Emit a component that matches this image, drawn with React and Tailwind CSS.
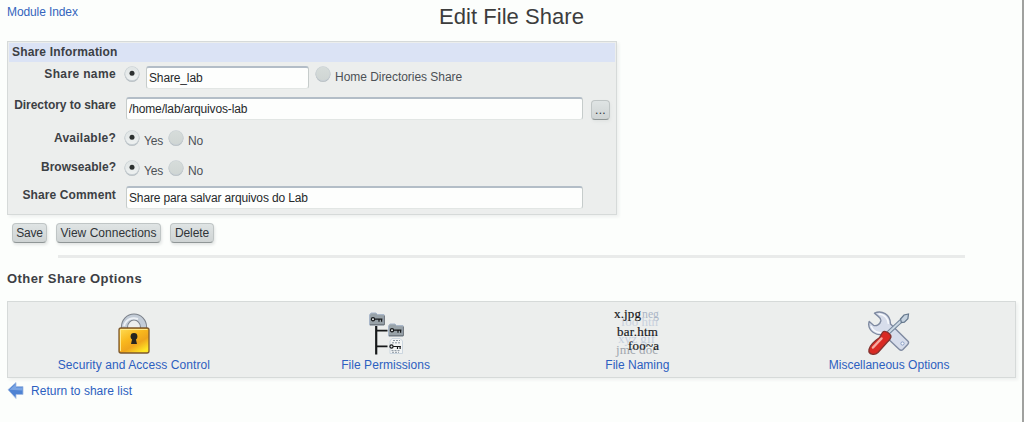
import React from "react";

function Radio({ checked = false }) {
  return (
    <svg className="block h-4 w-4 shrink-0" viewBox="0 0 16 16">
      <defs>
        <linearGradient id={checked ? "radioOn" : "radioOff"} x1="0" y1="0" x2="0" y2="1">
          <stop offset="0" stopColor={checked ? "#dfe4e4" : "#d6dcda"} />
          <stop offset="1" stopColor={checked ? "#eef1f1" : "#d0d6d4"} />
        </linearGradient>
      </defs>
      <circle cx="8" cy="8.4" r="7.4" fill="#a9b2b8" />
      <circle cx="8" cy="7.8" r="7.5" fill="#c9d0d4" />
      <circle cx="8" cy="7.4" r="6.7" fill={checked ? "url(#radioOn)" : "url(#radioOff)"} />
      {checked && <circle cx="8" cy="7.2" r="2.5" fill="#2c3030" />}
    </svg>
  );
}

function Label({ className, children }) {
  return (
    <div className={"w-[107px] shrink-0 text-right font-bold leading-4 whitespace-nowrap text-[#3c4044] " + className}>
      {children}
    </div>
  );
}

function Field({ className, value }) {
  return (
    <input
      className={
        "block rounded-[3px] border border-t-2 border-[#c6cccb] border-t-[#b3bdc7] border-b-[#e2e6e4] bg-[#fdfefd] pb-px pl-[2px] text-xs tracking-[-0.14px] text-[#26292b] outline-none " +
        className
      }
      defaultValue={value}
    />
  );
}

function Button({ className, children }) {
  return (
    <button
      className={
        "flex h-5 items-center justify-center rounded-[4px] border border-[#bfc5c5] border-b-[#8f9696] bg-linear-to-b from-[#dfe4e4] to-[#cfd4d4] whitespace-nowrap text-[#303438] shadow-[1px_2px_3px_#e2e5e4] " +
        className
      }
    >
      {children}
    </button>
  );
}

function YesNo() {
  return (
    <div className="flex pl-[8px]">
      <Radio checked />
      <span className="ml-1 mt-[3px] w-[20px] leading-4 tracking-[-0.2px]">Yes</span>
      <span className="ml-1">
        <Radio />
      </span>
      <span className="ml-1 mt-[3px] leading-4 tracking-[-0.2px]">No</span>
    </div>
  );
}

function Padlock() {
  return (
    <svg className="h-[46px] w-[36px]" viewBox="0 0 36 46">
      <defs>
        <linearGradient id="gold" x1="0" y1="0" x2=".7" y2="1">
          <stop offset="0" stopColor="#ffdf58" />
          <stop offset=".45" stopColor="#f9b81d" />
          <stop offset=".7" stopColor="#efa51c" />
          <stop offset="1" stopColor="#ffe626" />
        </linearGradient>
      </defs>
      <path d="M8.5 22V16a9.5 10 0 0 1 19 0v6" fill="none" stroke="#7c828b" strokeWidth="7.2" />
      <path d="M8.5 22V16a9.5 10 0 0 1 19 0v6" fill="none" stroke="#c3ccd7" strokeWidth="5.2" />
      <path d="M8 15c2-7 8-9 14-7" fill="none" stroke="#edf1f6" strokeWidth="2" />
      <rect x="3" y="17" width="30" height="25" rx="2" fill="url(#gold)" stroke="#7c572d" strokeWidth="1.3" />
      <path d="M4.5 40V18.5h27" fill="none" stroke="#ffe98a" />
      <circle cx="18" cy="25.5" r="3.4" fill="#26251f" />
      <path d="M16.4 27h3.2l1.4 6h-6z" fill="#26251f" />
    </svg>
  );
}

function KeyGlyph({ x, y }) {
  return (
    <g transform={`translate(${x} ${y})`} fill="none" stroke="#16181a" strokeWidth="1.2">
      <circle cx="2" cy="2.2" r="1.6" fill="#e4e8e8" />
      <path d="M3.6 2.2h7.8M8 2.2v2.6M10.6 2.2v2.6" />
    </g>
  );
}

function FolderShape({ x, y }) {
  return (
    <g transform={`translate(${x} ${y})`}>
      <path d="M.5 2.5 2 .5h5l1.5 1.6h6.5v10.4H.5z" fill="#98a2a8" stroke="#a9b7ca" />
      <path d="M1 12.3h14.3V3" fill="none" stroke="#60676c" />
      <KeyGlyph x={2} y={4.5} />
    </g>
  );
}

function PermissionTree() {
  return (
    <svg className="h-[46px] w-[36px]" viewBox="0 0 36 46">
      <path d="M8.2 15v28.5" stroke="#17191b" strokeWidth="2.2" />
      <path d="M8 19.6h11.5M8 35.4h11.5" stroke="#17191b" strokeWidth="1.6" />
      <FolderShape x={1} y={1.5} />
      <FolderShape x={20} y={12.5} />
      <path d="M24 27.5h8l2.5 2.5v12.5H22V30z" fill="#f3f5f5" stroke="#c3cedb" strokeWidth=".8" />
      <path d="M25 29.5h7M24 31.8h8M23.5 39.6h8.5M24 41.3h7" stroke="#8b96a0" strokeDasharray="2 1" />
      <KeyGlyph x={21.5} y={33.3} />
    </svg>
  );
}

function FileNames() {
  return (
    <svg className="h-[46px] w-[50px] overflow-visible" viewBox="0 0 50 46" fontFamily="Liberation Serif, serif" fontSize="13">
      <g fill="#aab5c6">
        <text x="30" y="7" textLength="17" lengthAdjust="spacingAndGlyphs">neg</text>
        <text x="9" y="15" textLength="37" fill="#c9d1dd">foo htn</text>
        <text x="6" y="32" textLength="37" fill="#c4cede">xyz gif</text>
        <text x="4" y="43" textLength="42" fill="#a0a6ad">jmc doc</text>
      </g>
      <g fill="#17191b" stroke="#17191b" strokeWidth=".2">
        <text x="2" y="7" textLength="27">x.jpg</text>
        <text x="5" y="25" textLength="41">bar.htm</text>
        <text x="16" y="39" textLength="31">foo~a</text>
      </g>
    </svg>
  );
}

function Tools() {
  return (
    <svg className="h-[46px] w-[44px]" viewBox="0 0 44 46">
      <path
        d="M7.5 2.2c7-3.2 16 1 16 10.8l17.5 17.2c1.3 1.4.5 2.5-.8 3.8l-4.3 4.5c-1.5 1.5-2.5 1-3.8-.2L16.5 23.5C9 25 2 20 1.7 13.5c0-1.2.2-2 .5-3l4.3 3.8c3 1 6.5-.8 7.3-4.3.4-2-1-3.4-2.5-4.6z"
        fill="#d7ddeb"
        stroke="#7f8aa1"
        strokeWidth="1.4"
        strokeLinejoin="round"
      />
      <path d="M11.5 3c6 .5 9.5 4 10 10M4 15c2 5 6 7 12 7" fill="none" stroke="#f7f9fd" strokeWidth="1.5" />
      <circle cx="35.5" cy="32.5" r="1.6" fill="#f6f8fb" stroke="#7990be" strokeWidth=".8" />
      <path d="m21 22 14-13" stroke="#72859a" strokeWidth="4" />
      <path d="m21 22 14-13" stroke="#cbd8e3" strokeWidth="2" />
      <path d="m33.5 8 3.5-4 4.5-1-.6 4.7-3.5 3.5-3 .3z" fill="#c5d2df" stroke="#65788d" strokeWidth="1.2" />
      <path
        d="M16.5 20.5c2.5-1 7.5 2.5 7.5 5.5-1 3-2 3.5-4 5.5l-9 10c-3 3-10 2.5-9-3C3 34 9 29 12 27c3-2.5 2-5 4.5-6.5z"
        fill="#d92a23"
        stroke="#833330"
        strokeWidth="1.3"
      />
      <path d="M14.5 27.5 6 36.5" stroke="#f6aaa0" strokeWidth="2.5" strokeLinecap="round" />
    </svg>
  );
}

const OPTIONS = [
  { name: "Security and Access Control", Icon: Padlock, spacing: "tracking-[0.08px]" },
  { name: "File Permissions", Icon: PermissionTree, spacing: "tracking-[0.05px]" },
  { name: "File Naming", Icon: FileNames, spacing: "tracking-[0px]" },
  { name: "Miscellaneous Options", Icon: Tools, spacing: "tracking-[0px]" },
];

export default function App() {
  return (
    <div className="flex h-[422px] w-full flex-col overflow-hidden border-r-2 border-[#a0a19f] bg-[#fcfefc] pl-[7px] font-['Liberation_Sans',Arial,sans-serif] text-xs tracking-[0.02px] text-[#4c5156]">
      <header className="grid h-[41px] grid-cols-[300px_409px_1fr]">
        <a className="mt-1 leading-4 tracking-[-0.1px] text-[#3465bd]">Module Index</a>
        <h1 className="mt-[3px] text-center text-[22px] leading-7 tracking-[0.05px] text-[#3c3d3d]">Edit File Share</h1>
      </header>

      <section className="h-[174px] w-[610px] shrink-0 border border-[#d6dad9] bg-[#eceeed] p-px shadow-[2px_2px_3px_#eef0ef]">
        <h2 className="h-[19px] bg-[#dbe3f5] pl-[3px] leading-[19px] font-bold tracking-[0.17px] text-[#3c4044]">
          Share Information
        </h2>
        <div className="flex h-[34px] pt-1">
          <Label className="tracking-[0.37px]">Share name</Label>
          <div className="flex pl-[8px]">
            <Radio checked />
            <Field className="ml-[6px] h-[23px] w-[163px]" value="Share_lab" />
            <span className="ml-[6px]">
              <Radio />
            </span>
            <span className="ml-1 mt-[3px] leading-4 tracking-[-0.04px]">Home Directories Share</span>
          </div>
        </div>
        <div className="flex h-[34px] pt-[1px]">
          <Label className="tracking-[-0.05px]">Directory to share</Label>
          <Field className="ml-[10px] h-[23px] w-[457px]" value="/home/lab/arquivos-lab" />
          <Button className="ml-[8px] mt-[3px] w-[19px] tracking-[0.3px]">...</Button>
        </div>
        <div className="flex h-[30px]">
          <Label className="tracking-[0.25px]">Available?</Label>
          <YesNo />
        </div>
        <div className="flex h-[26px]">
          <Label className="-mt-px tracking-[0.03px]">Browseable?</Label>
          <YesNo />
        </div>
        <div className="flex">
          <Label className="mt-[1px] tracking-[0.12px]">Share Comment</Label>
          <Field className="ml-[10px] h-[23px] w-[457px]" value="Share para salvar arquivos do Lab" />
        </div>
      </section>

      <div className="mt-2 flex h-5 shrink-0 pl-[5px]">
        <Button className="w-[35px] tracking-[-0.2px]">Save</Button>
        <Button className="ml-[9px] w-[105px]">View Connections</Button>
        <Button className="ml-[9px] w-[44px] tracking-[-0.1px]">Delete</Button>
      </div>

      <hr className="mt-3 ml-[51px] h-[3px] w-[907px] shrink-0 border-0 bg-[#e9ebea]" />

      <h2 className="mt-[13px] h-[30px] shrink-0 text-[13px] leading-4 font-bold tracking-[0.42px] text-[#3c4044]">
        Other Share Options
      </h2>

      <section className="grid h-[77px] w-[1009px] shrink-0 grid-cols-4 border border-[#d6dad9] bg-[#eceeed] shadow-[2px_2px_3px_#eef0ef]">
        {OPTIONS.map(({ name, Icon, spacing }) => (
          <a key={name} className="flex flex-col items-center pt-[9px] text-[#2c60c0]">
            <Icon />
            <span className={"leading-4 " + spacing}>{name}</span>
          </a>
        ))}
      </section>

      <footer className="flex pt-[4px]">
        <svg className="h-[18px] w-[17px]" viewBox="0 0 17 18">
          <path d="M1 7.7 9 .5v4h7v8H9v4z" fill="#4f83d3" stroke="#a5bce2" strokeWidth=".8" />
          <path d="M2.5 7.7 9 2v3.5h6.5v3z" fill="#7ba5e3" />
        </svg>
        <a className="ml-[7px] mt-px leading-4 text-[#2c60c0]">Return to share list</a>
      </footer>
    </div>
  );
}
